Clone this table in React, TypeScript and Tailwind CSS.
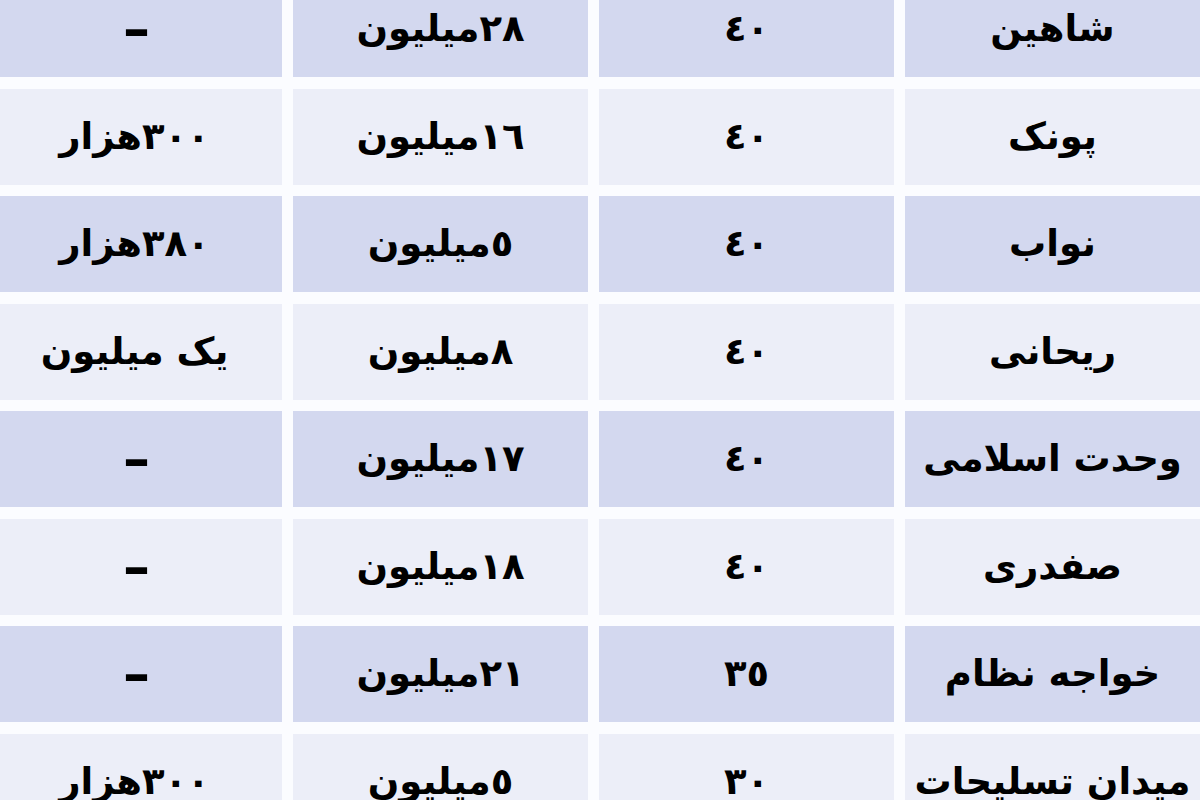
const rows = [
  ['شاهین', '٤٠', '٢٨میلیون', '–'],
  ['پونک', '٤٠', '١٦میلیون', '٣٠٠هزار'],
  ['نواب', '٤٠', '٥میلیون', '٣٨٠هزار'],
  ['ریحانی', '٤٠', '٨میلیون', 'یک میلیون'],
  ['وحدت اسلامی', '٤٠', '١٧میلیون', '–'],
  ['صفدری', '٤٠', '١٨میلیون', '–'],
  ['خواجه نظام', '٣٥', '٢١میلیون', '–'],
  ['میدان تسلیحات', '٣٠', '٥میلیون', '٣٠٠هزار'],
];

export default function App() {
  return (
    <main className="w-[1200px] h-[800px] overflow-hidden bg-[#fbfcff]">
      <div
        dir="rtl"
        className="w-[1213px] -ml-[13px] -mt-[19px] grid grid-cols-[repeat(4,295px)] auto-rows-[96px] gap-x-[11px] gap-y-[11.5px] text-black font-bold text-[37px]"
        style={{ fontFamily: '"DejaVu Sans", sans-serif' }}
      >
        {rows.map((row, i) =>
          row.map((cell, j) => (
            <div
              key={`${i}-${j}`}
              className={`flex items-center justify-center whitespace-nowrap ${
                i % 2 === 0 ? 'bg-[#d3d8ef]' : 'bg-[#eceef8]'
              }`}
            >
              {cell === '–' ? (
                <span className="text-[54px] font-semibold leading-none pl-[4px]">–</span>
              ) : (
                cell
              )}
            </div>
          ))
        )}
      </div>
    </main>
  );
}
